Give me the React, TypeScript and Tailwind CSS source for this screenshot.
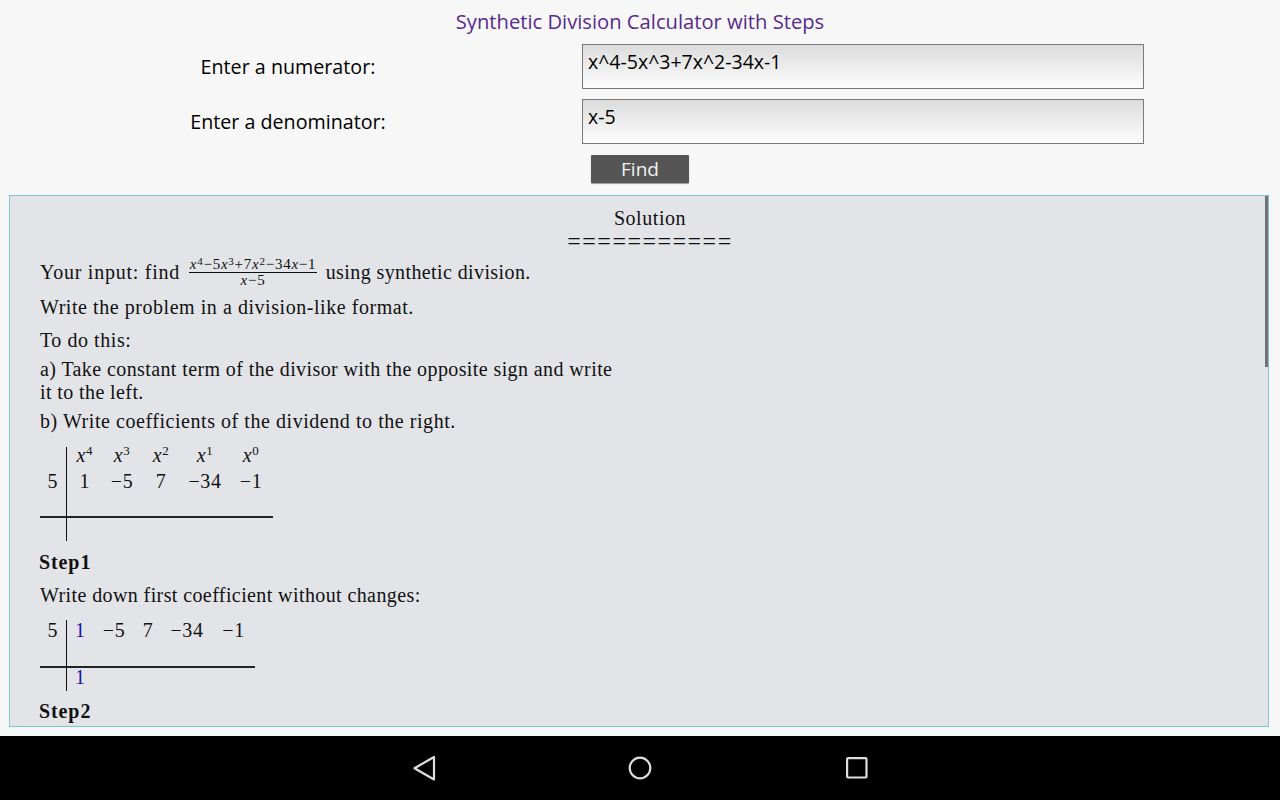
const serif = { fontFamily: '"Liberation Serif", "DejaVu Serif", serif' };

const Sup = ({ base, exp }: { base: string; exp: string }) => (
  <span className="whitespace-nowrap">
    <i>{base}</i>
    <sup className="relative -top-[7px] align-baseline text-[13px] leading-none">{exp}</sup>
  </span>
);

const SmallSup = ({ children }: { children: string }) => (
  <sup className="relative -top-[4px] align-baseline text-[11px] leading-none">{children}</sup>
);

const FormRow = ({ label, value }: { label: string; value: string }) => (
  <div className="grid h-[45px] grid-cols-[576px_562px] gap-x-[6px]">
    <label className="flex items-center justify-center text-[19.7px] text-black">{label}</label>
    <input
      readOnly
      value={value}
      className="h-[45px] w-[562px] border border-[#7a7a7a] bg-gradient-to-b from-[#dcdcdc] to-[#fdfdfd] px-[5px] pb-[10px] text-[19.5px] text-black outline-none"
    />
  </div>
);

const First = ({ w, children, className = '' }: { w: string; children?: React.ReactNode; className?: string }) => (
  <td className={`${w} p-0 text-center ${className}`}>{children}</td>
);

const NavBar = () => (
  <div className="flex h-[64px] items-center justify-center bg-black">
    <svg width="26" height="28" viewBox="0 0 26 28" className="mr-[190px]" fill="none" stroke="#dedede" strokeWidth="2.2" strokeLinejoin="round">
      <path d="M23 3 V25.5 L3.5 14.2 Z" />
    </svg>
    <svg width="26" height="26" viewBox="0 0 26 26" className="mr-[192px]" fill="none" stroke="#dedede" strokeWidth="2.2">
      <circle cx="13" cy="13" r="10.3" />
    </svg>
    <svg width="24" height="24" viewBox="0 0 24 24" fill="none" stroke="#dedede" strokeWidth="2.2" strokeLinejoin="round">
      <rect x="2.1" y="2.1" width="19.4" height="19.4" rx="1" />
    </svg>
  </div>
);

export default function App() {
  return (
    <div className="flex h-[800px] w-[1280px] flex-col overflow-hidden bg-[#f7f7f7]" style={{ fontFamily: '"Open Sans", "Noto Sans", sans-serif' }}>
      <h1 className="h-[44px] pt-[7px] text-center text-[20.2px] leading-[28px] font-normal text-[#572a8c]">
        Synthetic Division Calculator with Steps
      </h1>

      <div className="flex flex-col gap-[10px]">
        <FormRow label="Enter a numerator:" value="x^4-5x^3+7x^2-34x-1" />
        <FormRow label="Enter a denominator:" value="x-5" />
      </div>

      <div className="mt-[11px] pl-[591px]">
        <button className="h-[28px] w-[98px] rounded-[1px] bg-[#555555] text-[19px] leading-[28px] text-[#f2f2f2] shadow-[0_1px_1px_#999]">
          Find
        </button>
      </div>

      <div className="relative mt-[12px] ml-[9px] h-[532px] w-[1260px] overflow-hidden border border-[#7fc8d2] bg-[#e3e4e8] pr-[8px] pl-[30px] text-[20px] tracking-[0.55px] text-[#111]" style={serif}>
        <div className="absolute top-0 right-0 h-[171px] w-[3px] bg-[#6f7378]" />

        <div className="pt-[10px] text-center leading-[24px]">Solution</div>
        <div className="h-[24px] text-center text-[24px] leading-[22px] tracking-[1.5px]">===========</div>

        <div className="flex h-[36px] items-center whitespace-pre">
          <span className="tracking-[0.75px]">Your input: find </span>
          <span className="mx-[3px] inline-flex flex-col items-center text-[15px] leading-[15px] tracking-[0.75px]">
            <span className="whitespace-nowrap border-b border-[#111] px-[1px]">
              <i>x</i><SmallSup>4</SmallSup>−5<i>x</i><SmallSup>3</SmallSup>+7<i>x</i><SmallSup>2</SmallSup>−34<i>x</i>−1
            </span>
            <span><i>x</i>−5</span>
          </span>
          <span className="tracking-[0.4px]"> using synthetic division.</span>
        </div>

        <p className="mt-[4px] leading-[26px]">Write the problem in a division-like format.</p>
        <p className="mt-[7px] leading-[26px]">To do this:</p>
        <p className="mt-[5px] w-[585px] leading-[23px] tracking-[0.4px]">a) Take constant term of the divisor with the opposite sign and write it to the left.</p>
        <p className="mt-[6px] leading-[23px]">b) Write coefficients of the dividend to the right.</p>

        <table className="mt-[14px] table-fixed border-collapse leading-[16px]">
          <tbody>
            <tr className="h-[17px]">
              <First w="w-[26px]" className="border-r border-[#111]" />
              <First w="w-[37px]"><Sup base="x" exp="4" /></First>
              <First w="w-[38px]"><Sup base="x" exp="3" /></First>
              <First w="w-[40px]"><Sup base="x" exp="2" /></First>
              <First w="w-[48px]"><Sup base="x" exp="1" /></First>
              <First w="w-[44px]"><Sup base="x" exp="0" /></First>
            </tr>
            <tr className="h-[33px]">
              <First w="w-[26px]" className="border-r border-[#111]">5</First>
              <First w="w-[37px]">1</First>
              <First w="w-[38px]">−5</First>
              <First w="w-[40px]">7</First>
              <First w="w-[48px]">−34</First>
              <First w="w-[44px]">−1</First>
            </tr>
            <tr className="h-[20px] border-b-2 border-[#222]">
              <First w="w-[26px]" className="border-r border-[#111]" />
              <td colSpan={5} />
            </tr>
            <tr className="h-[24px]">
              <First w="w-[26px]" className="border-r border-[#111]" />
              <td colSpan={5} />
            </tr>
          </tbody>
        </table>

        <p className="mt-[8px] -ml-[1px] leading-[26px] font-bold tracking-[0.9px]">Step1</p>
        <p className="mt-[7px] leading-[26px] tracking-[0.4px]">Write down first coefficient without changes:</p>

        <table className="mt-[12px] table-fixed border-collapse leading-[16px]">
          <tbody>
            <tr className="h-[20px]">
              <First w="w-[26px]" className="border-r border-[#111]">5</First>
              <First w="w-[28px]" className="text-[#1a12a8]">1</First>
              <First w="w-[40px]">−5</First>
              <First w="w-[28px]">7</First>
              <First w="w-[50px]">−34</First>
              <First w="w-[43px]">−1</First>
            </tr>
            <tr className="h-[27px] border-b-2 border-[#222]">
              <First w="w-[26px]" className="border-r border-[#111]" />
              <td colSpan={5} />
            </tr>
            <tr className="h-[24px]">
              <First w="w-[26px]" className="border-r border-[#111]" />
              <First w="w-[28px]" className="pb-[5px] text-[#1a12a8]">1</First>
              <td colSpan={4} />
            </tr>
          </tbody>
        </table>

        <p className="mt-[7px] -ml-[1px] leading-[26px] font-bold tracking-[0.9px]">Step2</p>
      </div>

      <div className="h-[9px] bg-[#f3f8f6]" />
      <NavBar />
    </div>
  );
}
